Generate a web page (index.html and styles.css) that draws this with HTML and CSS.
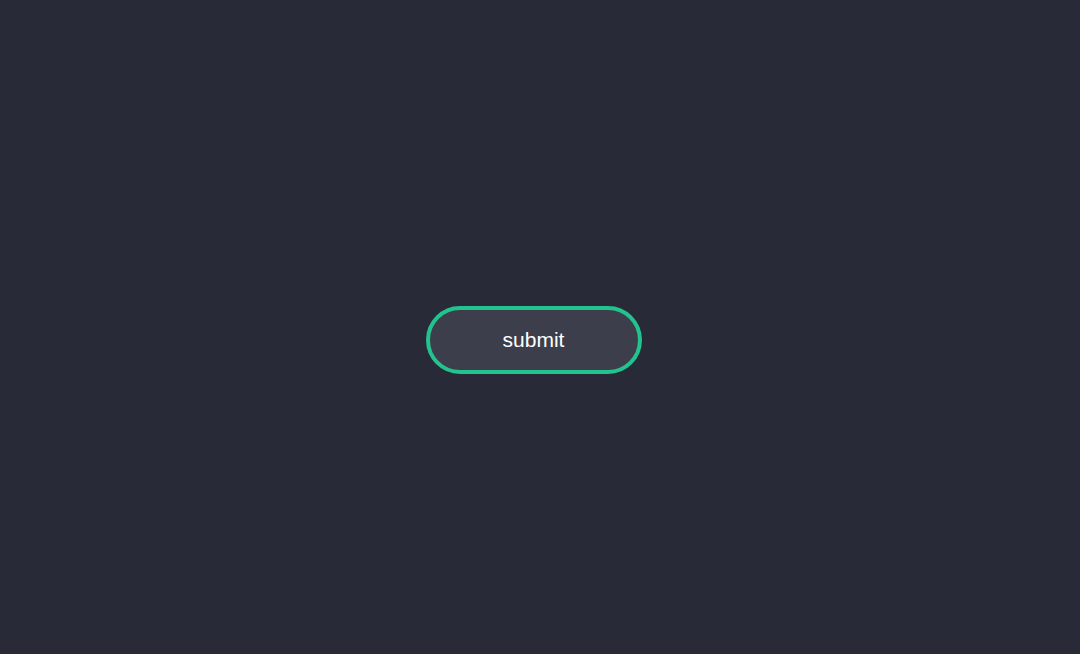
FILE: index.html
```html
<!DOCTYPE html>
<html>
<head>
<meta charset="utf-8">
<link rel="stylesheet" href="styles.css">
</head>
<body>
<main class="stage">
  <button class="submit-btn" type="button">submit</button>
</main>
</body>
</html>
```
FILE: styles.css
```css
html, body {
  margin: 0;
  padding: 0;
  background: #282a37;
}
.stage {
  box-sizing: border-box;
  height: 654px;
  display: flex;
  align-items: center;
  justify-content: center;
  padding: 25px 13px 0 0;
}
.submit-btn {
  box-sizing: border-box;
  width: 216px;
  height: 68px;
  border: 4px solid #22c38f;
  border-radius: 34px;
  background: #3d3e4b;
  color: #ffffff;
  font-family: "Liberation Sans", Arial, sans-serif;
  font-size: 21px;
  padding: 0;
  cursor: pointer;
}
```
